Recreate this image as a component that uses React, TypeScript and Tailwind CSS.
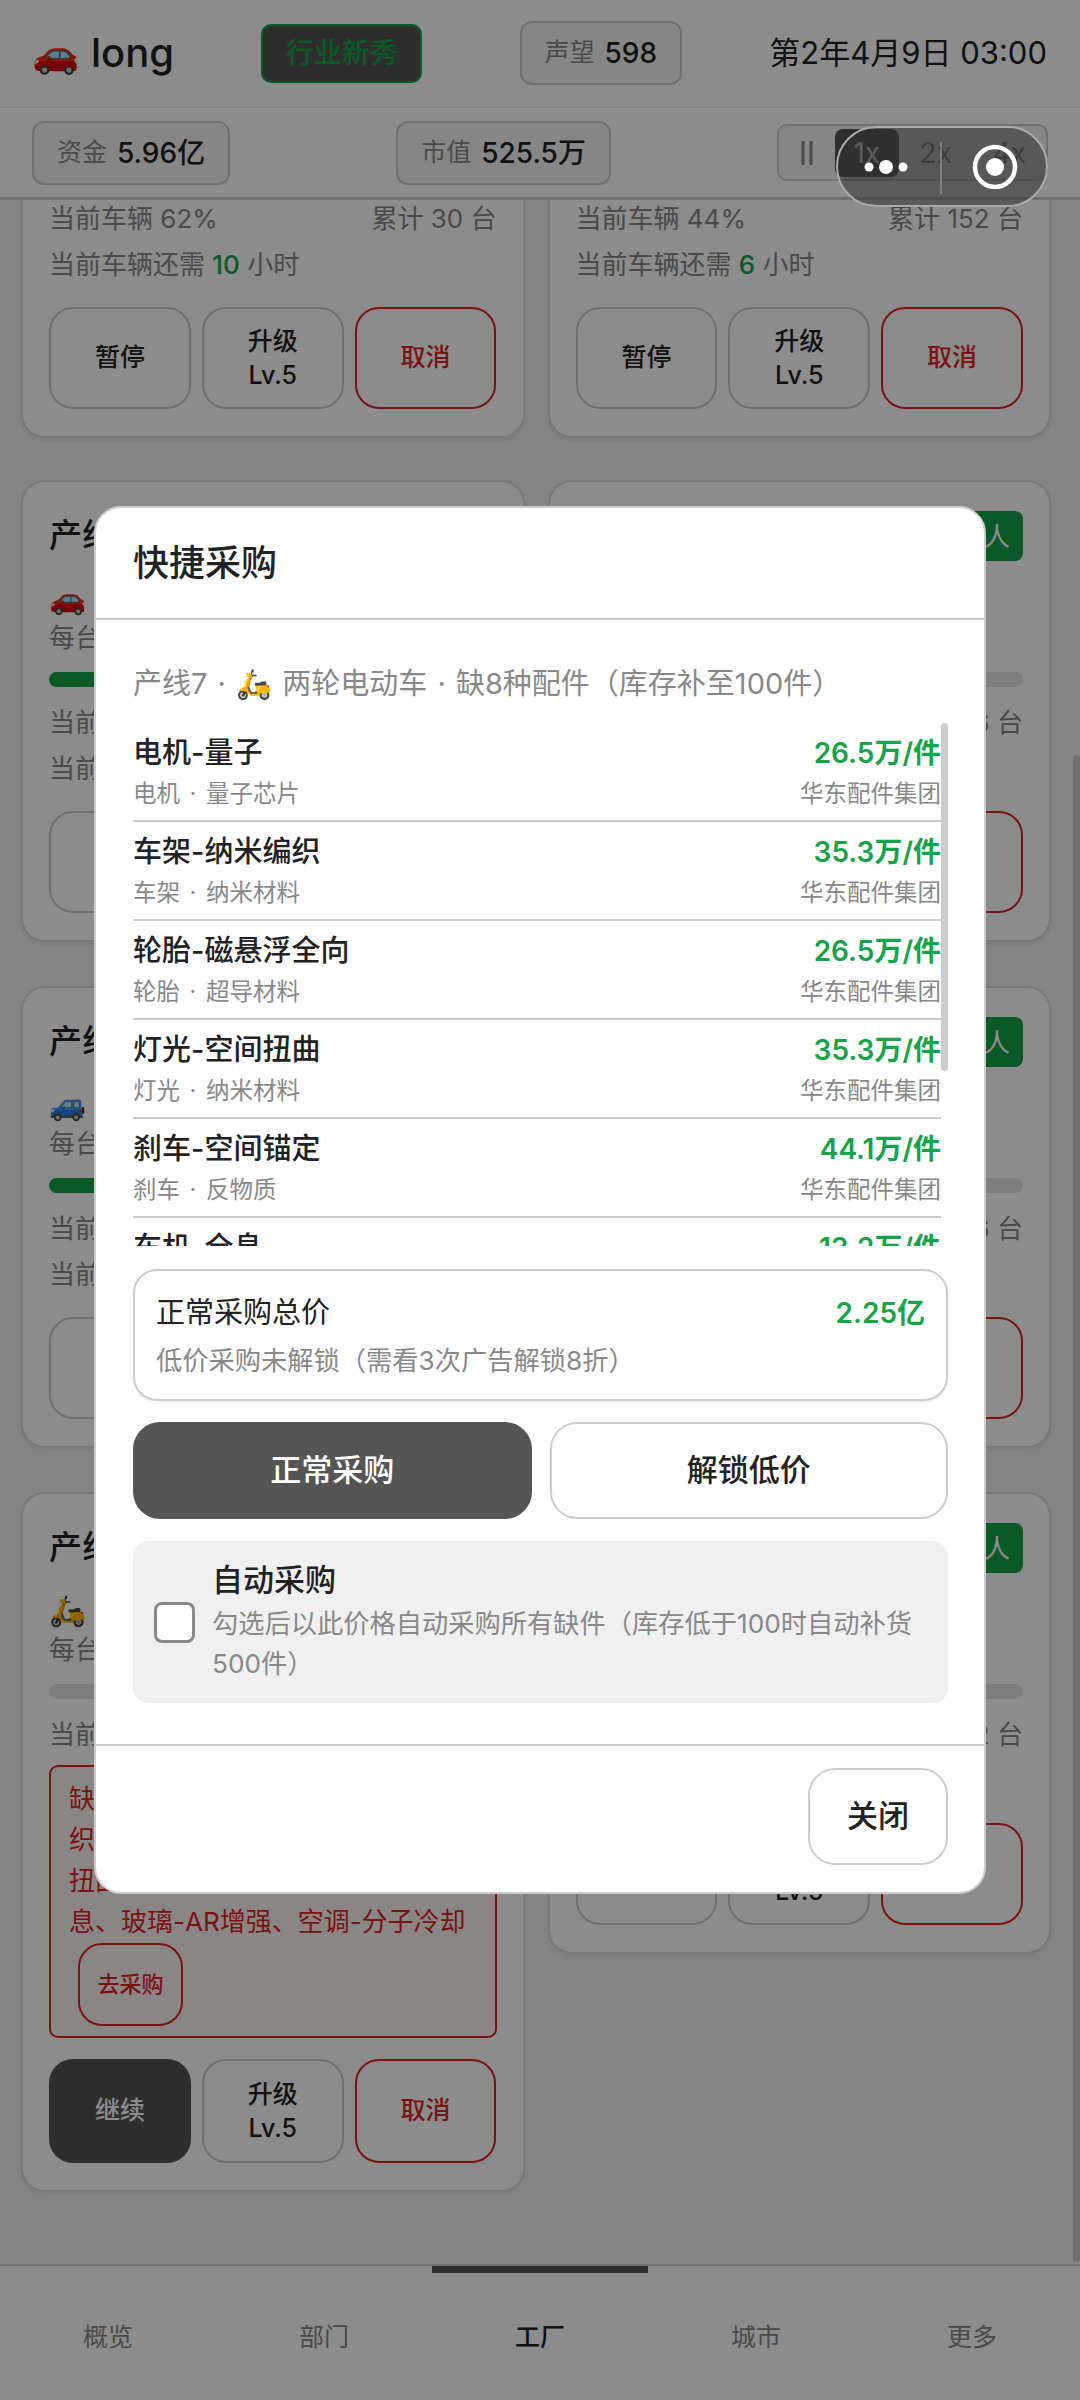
import React from 'react';

const fontStack = "font-['Inter','Noto_Sans_CJK_SC',sans-serif]";

type Line = {
    name: string;
    emoji: string;
    perUnit: string;
    progress: number;
    percent: string;
    total: number;
    hours?: number;
    paused?: boolean;
    shortage?: boolean;
    staffed?: boolean;
};

const lines: Line[] = [
    { name: '产线1', emoji: '🚗', perUnit: '每台 12.5万', progress: 62, percent: '62%', total: 30, hours: 10 },
    { name: '产线2', emoji: '🚙', perUnit: '每台 18.2万', progress: 44, percent: '44%', total: 152, hours: 6 },
    { name: '产线3', emoji: '🚗', perUnit: '每台 12.5万', progress: 50, percent: '0%', total: 46, hours: 8, staffed: true },
    { name: '产线4', emoji: '🚙', perUnit: '每台 18.2万', progress: 0, percent: '0%', total: 86, hours: 9, staffed: true },
    { name: '产线5', emoji: '🚙', perUnit: '每台 18.2万', progress: 50, percent: '0%', total: 26, hours: 7 },
    { name: '产线6', emoji: '🚗', perUnit: '每台 12.5万', progress: 0, percent: '0%', total: 76, hours: 5, staffed: true },
    { name: '产线7', emoji: '🛵', perUnit: '每台 3.2万', progress: 0, percent: '0%', total: 12, paused: true, shortage: true },
    { name: '产线8', emoji: '🚗', perUnit: '每台 12.5万', progress: 0, percent: '0%', total: 92, hours: 4, staffed: true },
];

const parts = [
    { title: '电机-量子', sub: '电机 · 量子芯片', price: '26.5万/件' },
    { title: '车架-纳米编织', sub: '车架 · 纳米材料', price: '35.3万/件' },
    { title: '轮胎-磁悬浮全向', sub: '轮胎 · 超导材料', price: '26.5万/件' },
    { title: '灯光-空间扭曲', sub: '灯光 · 纳米材料', price: '35.3万/件' },
    { title: '刹车-空间锚定', sub: '刹车 · 反物质', price: '44.1万/件' },
    { title: '车机-全息', sub: '车机 · 量子芯片', price: '13.2万/件' },
];

const tabs = ['概览', '部门', '工厂', '城市', '更多'];

const LineCard: React.FC<{ line: Line; firstRow: boolean }> = ({ line, firstRow }) => (
    <div
        className={`bg-white border-2 border-[#ddd] rounded-[24px] px-[26px] pt-[29px] pb-[27px] shadow-[0_2px_4px_rgba(0,0,0,0.08)] ${
            firstRow ? '-mb-[2px]' : ''
        }`}
    >
        <div className="flex items-center justify-between h-[50px]">
            <span className="text-[33px] font-medium text-[#222]">{line.name}</span>
            {line.staffed && (
                <span className="h-[50px] px-[13px] flex items-center rounded-[8px] bg-[#16a34a] text-white text-[26px]">招工人</span>
            )}
        </div>
        <div className="mt-[20px] h-[33px] flex items-center gap-2 text-[30px] leading-none text-[#333]">
            <span>{line.emoji}</span>
            <span className="text-[26px]">整车组装</span>
        </div>
        <div className="mt-[5px] h-[36px] flex items-center text-[26px] text-[#888]">{line.perUnit}</div>
        <div className="mt-[17px] h-[15px] rounded-full bg-[#e5e5e5] overflow-hidden">
            <div className="h-full bg-[#16a34a]" style={{ width: `${line.progress}%` }} />
        </div>
        <div className="mt-[12px] h-[46px] flex items-center justify-between text-[26px] text-[#888]">
            <span>当前车辆 {line.percent}</span>
            <span>累计 {line.total} 台</span>
        </div>
        {line.hours !== undefined && (
            <div className="h-[46px] flex items-center text-[26px] text-[#888]">
                <span>
                    当前车辆还需 <span className="text-[#16a34a] font-medium">{line.hours}</span> 小时
                </span>
            </div>
        )}
        {line.shortage && (
            <div className="mt-[8px] border-2 border-[#dc2626] rounded-[9px] bg-[#dc2626]/5 pt-[11px] pl-[18px] pr-[8px] pb-[10px] text-[#dc2626] text-[26px] leading-[41px] whitespace-nowrap">
                缺配件：电机-量子、车架-纳米编
                <br />
                织、轮胎-磁悬浮全向、灯光-空间
                <br />
                扭曲、刹车-空间锚定、车机-全
                <br />
                息、玻璃-AR增强、空调-分子冷却
                <div className="mt-[1px] ml-[9px] w-[105px] h-[83px] flex items-center justify-center border-2 border-[#dc2626] rounded-[24px] text-[22px] font-medium">
                    去采购
                </div>
            </div>
        )}
        <div className={`grid grid-cols-3 gap-[11px] ${line.shortage ? 'mt-[21px] h-[104px]' : 'mt-[20px] h-[102px]'}`}>
            {line.paused ? (
                <div className="flex items-center justify-center rounded-[24px] bg-[#555] text-white text-[25px] font-medium">继续</div>
            ) : (
                <div className="flex items-center justify-center rounded-[24px] border-2 border-[#ccc] text-[#222] text-[25px] font-medium">暂停</div>
            )}
            <div className="flex flex-col items-center justify-center rounded-[24px] border-2 border-[#ccc] text-[#222] text-[25px] font-medium leading-[34px]">
                <span>升级</span>
                <span>Lv.5</span>
            </div>
            <div className="flex items-center justify-center rounded-[24px] border-2 border-[#dc2626] text-[#dc2626] text-[25px] font-medium">取消</div>
        </div>
    </div>
);

const Chip: React.FC<{ label: string; value: string }> = ({ label, value }) => (
    <div className="h-[64px] px-[23px] flex items-center gap-[10px] bg-[#f5f5f5] border-2 border-[#ccc] rounded-[12px] text-[25px]">
        <span className="text-[#888]">{label}</span>
        <span className="font-medium text-[28px] text-[#222]">{value}</span>
    </div>
);

const Capsule: React.FC = () => (
    <div className="absolute top-[126px] left-[836px] w-[212px] h-[81px] rounded-full bg-[#333]/55 border-2 border-[#aaa] z-50">
        <svg width="208" height="77" viewBox="0 0 208 77">
            <circle cx="31" cy="39" r="4.5" fill="#fff" />
            <circle cx="48" cy="39" r="7" fill="#fff" />
            <circle cx="65" cy="39" r="4.5" fill="#fff" />
            <line x1="103" y1="14" x2="103" y2="66" stroke="#8a8a8a" strokeWidth="1.5" />
            <circle cx="157" cy="39" r="20" fill="none" stroke="#fff" strokeWidth="4.5" />
            <circle cx="157" cy="39" r="9" fill="#fff" />
        </svg>
    </div>
);

const PurchaseModal: React.FC = () => (
    <div className="w-[892px] h-[1388px] bg-white border-2 border-[#ccc] rounded-[27px] flex flex-col overflow-hidden">
        <div className="h-[112px] shrink-0 flex items-center pl-[37px] border-b-2 border-[#ccc] text-[36px] font-medium text-[#222]">
            快捷采购
        </div>

        <div className="flex-1 pl-[37px] pr-[36px] pt-[44px] flex flex-col">
            <div className="h-[40px] flex items-center text-[29px] text-[#888] whitespace-pre [word-spacing:2px]">
                产线7 · 🛵 两轮电动车 · 缺8种配件（库存补至100件）
            </div>

            {/* part list */}
            <div className="mt-[19px] h-[523px] flex overflow-hidden">
                <div className="flex-1 min-w-0">
                    {parts.map((p) => (
                        <div key={p.title} className="h-[99px] border-b-2 border-[#ccc]">
                            <div className="h-[59px] flex items-center justify-between">
                                <span className="text-[29px] font-medium text-[#222]">{p.title}</span>
                                <span className="text-[28px] font-semibold text-[#16a34a]">{p.price}</span>
                            </div>
                            <div className="h-[23px] flex items-center justify-between text-[23.5px] text-[#888]">
                                <span className="[word-spacing:3px]">{p.sub}</span>
                                <span>华东配件集团</span>
                            </div>
                        </div>
                    ))}
                </div>
                <div className="w-[7px] shrink-0">
                    <div className="h-[348px] rounded-full bg-[#ccc]" />
                </div>
            </div>

            {/* total */}
            <div className="mt-[23px] h-[132px] border-2 border-[#ccc] rounded-[24px] px-[21px] pt-[20px] shadow-[0_2px_3px_rgba(0,0,0,0.06)]">
                <div className="h-[44px] flex items-center justify-between">
                    <span className="text-[29px] text-[#222]">正常采购总价</span>
                    <span className="text-[28px] font-semibold text-[#16a34a]">2.25亿</span>
                </div>
                <div className="mt-[4px] h-[44px] flex items-center text-[26.25px] text-[#888]">低价采购未解锁（需看3次广告解锁8折）</div>
            </div>

            <div className="mt-[21px] grid grid-cols-2 gap-[18px] h-[97px]">
                <div className="flex items-center justify-center rounded-[27px] bg-[#555] text-white text-[31px] font-medium">正常采购</div>
                <div className="flex items-center justify-center rounded-[27px] border-2 border-[#ccc] text-[#222] text-[31px] font-medium">解锁低价</div>
            </div>

            {/* auto purchase */}
            <div className="mt-[22px] h-[162px] rounded-[15px] bg-[#f0f0f0] pl-[21px] pr-[20px] flex items-center gap-[17px]">
                <div className="w-[41px] h-[41px] shrink-0 bg-white border-[3px] border-[#888] rounded-[8px]" />
                <div>
                    <div className="text-[31px] leading-[40px] font-medium text-[#222]">自动采购</div>
                    <div className="mt-[4px] text-[26.25px] leading-[40px] text-[#888]">勾选后以此价格自动采购所有缺件（库存低于100时自动补货500件）</div>
                </div>
            </div>
        </div>

        <div className="h-[148px] shrink-0 border-t-2 border-[#ccc] flex justify-end pt-[22px] pr-[36px]">
            <div className="w-[140px] h-[97px] flex items-center justify-center rounded-[27px] border-2 border-[#ccc] text-[31px] font-medium text-[#222]">
                关闭
            </div>
        </div>
    </div>
);

const App: React.FC = () => {
    return (
        <div className={`relative w-[1080px] h-[2400px] overflow-hidden bg-[#f0f0f0] flex flex-col ${fontStack}`}>
            {/* Top status */}
            <div className="relative z-10 h-[108px] shrink-0 bg-white border-b-2 border-[#eee] pl-[32px] pr-[33px] flex items-center justify-between">
                <div className="flex items-center gap-[12px] text-[40px] font-medium text-[#222]">
                    <span className="text-[38px]">🚗</span>
                    <span>long</span>
                </div>
                <div className="w-[161px] h-[59px] mr-[10px] flex items-center justify-center bg-[#555] border-2 border-[#16a34a] rounded-[10px] text-[#16a34a] text-[28px] font-medium">
                    行业新秀
                </div>
                <Chip label="声望" value="598" />
                <div className="text-[31px] text-[#222]">第2年4月9日 03:00</div>
            </div>

            <div className="relative z-10 h-[92px] shrink-0 bg-white border-b-[3px] border-[#ccc] pl-[32px] pr-[32px] flex items-center justify-between">
                <Chip label="资金" value="5.96亿" />
                <Chip label="市值" value="525.5万" />
                <div className="w-[271px] h-[57px] flex items-center bg-[#f5f5f5] border-2 border-[#ccc] rounded-[10px] text-[28px] text-[#888]">
                    <span className="w-[56px] flex justify-center">
                        <svg width="12" height="26" viewBox="0 0 12 26">
                            <line x1="2" y1="1" x2="2" y2="25" stroke="#888" strokeWidth="3" />
                            <line x1="10" y1="1" x2="10" y2="25" stroke="#888" strokeWidth="3" />
                        </svg>
                    </span>
                    <span className="w-[65px] h-[48px] flex items-center justify-center rounded-[8px] bg-[#555] text-white">1x</span>
                    <span className="w-[74px] text-center">2x</span>
                    <span className="w-[74px] text-center">4x</span>
                </div>
            </div>

            {/* Production lines, scrolled */}
            <div className="flex-1 min-h-0 overflow-hidden">
                <div className="-mt-[224px] pl-[21px] pr-[29px] grid grid-cols-2 gap-x-[23px] gap-y-[44px] items-start">
                    {lines.map((l, i) => (
                        <LineCard key={l.name} line={l} firstRow={i < 2} />
                    ))}
                </div>
            </div>

            {/* Bottom tabs */}
            <div className="h-[136px] shrink-0 bg-white border-t-2 border-[#ccc] flex">
                {tabs.map((t) => (
                    <div
                        key={t}
                        className={`flex-1 border-t-[7px] pt-[46px] text-center text-[25px] ${
                            t === '工厂' ? 'border-[#555] text-[#222] font-medium' : 'border-transparent text-[#888]'
                        }`}
                    >
                        {t}
                    </div>
                ))}
            </div>

            {/* page scrollbar */}
            <div className="absolute top-[755px] right-0 w-[7px] h-[1507px] rounded-full bg-[#ccc]" />

            {/* Dim layer + dialog */}
            <div className="absolute inset-0 z-40 bg-black/45 flex items-center justify-center">
                <PurchaseModal />
            </div>

            <Capsule />
        </div>
    );
};

export default App;
